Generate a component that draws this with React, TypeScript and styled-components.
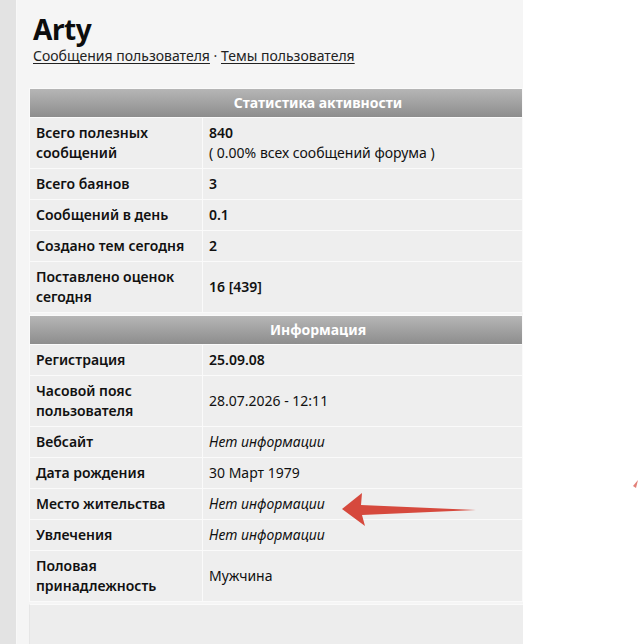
import React from "react";
import styled, { createGlobalStyle } from "styled-components";

const GlobalStyle = createGlobalStyle`
  html, body { margin: 0; padding: 0; background: #ffffff; }
  body { font-family: "Noto Sans", "Open Sans", sans-serif; color: #111; }
`;

const Page = styled.div`
  position: relative;
  display: flex;
  width: 640px;
  height: 644px;
  overflow: hidden;
  background: #ffffff;
`;

const Stripe = styled.div`
  width: 16px;
  flex: none;
  background: #e3e3e3;
  border-right: 1px solid #f8f8f8;
`;

const Content = styled.main`
  width: 494px;
  flex: none;
  background: #f5f5f5;
  padding: 12px 0 0 12px;
  display: flex;
  flex-direction: column;
`;

const Title = styled.h1`
  margin: 0 0 0 4px;
  font-size: 28px;
  line-height: 34px;
  font-weight: 700;
  letter-spacing: -0.4px;
  color: #0d0d0d;
`;

const Links = styled.div`
  margin: 0 0 22px 4px;
  font-size: 14px;
  line-height: 20px;
  color: #333;
`;

const Link = styled.a`
  color: #222;
  text-decoration: underline;
  text-underline-offset: 2px;
`;

const Section = styled.section`
  border: 1px solid #fafafa;
  margin-bottom: 2px;
  display: grid;
  grid-template-columns: 172px 1fr;
`;

const Header = styled.div`
  grid-column: 1 / -1;
  height: 28px;
  line-height: 28px;
  background: linear-gradient(#b6b6b6, #8d8d8d);
  color: #ffffff;
  font-weight: 700;
  font-size: 14px;
  text-align: center;
  padding-left: 84px;
`;

const Cell = styled.div<{ $label?: boolean; $bold?: boolean; $italic?: boolean }>`
  background: #eeeeee;
  border-top: 1px solid #fafafa;
  border-left: ${(p) => (p.$label ? "none" : "1px solid #fafafa")};
  padding: 5px 6px;
  min-height: 20px;
  display: flex;
  flex-direction: column;
  justify-content: center;
  font-size: 14px;
  line-height: 20px;
  font-weight: ${(p) => (p.$label || p.$bold ? 600 : 400)};
  font-style: ${(p) => (p.$italic ? "italic" : "normal")};
  color: #111;
`;

const Sub = styled.span`
  font-weight: 400;
`;

const Rest = styled.div`
  flex: 1;
  background: #ededed;
  border-top: 1px solid #fafafa;
  border-left: 1px solid #e6e6e6;
`;

const Arrow = styled.svg`
  position: absolute;
  left: 0;
  top: 0;
  pointer-events: none;
`;

type Row = { label: string; value: React.ReactNode; bold?: boolean; italic?: boolean };

const stats: Row[] = [
  {
    label: "Всего полезных сообщений",
    value: (
      <>
        <span>840</span>
        <Sub>( 0.00% всех сообщений форума )</Sub>
      </>
    ),
    bold: true,
  },
  { label: "Всего баянов", value: "3", bold: true },
  { label: "Сообщений в день", value: "0.1", bold: true },
  { label: "Создано тем сегодня", value: "2", bold: true },
  { label: "Поставлено оценок сегодня", value: "16 [439]", bold: true },
];

const info: Row[] = [
  { label: "Регистрация", value: "25.09.08", bold: true },
  { label: "Часовой пояс пользователя", value: "28.07.2026 - 12:11" },
  { label: "Вебсайт", value: "Нет информации", italic: true },
  { label: "Дата рождения", value: "30 Март 1979" },
  { label: "Место жительства", value: "Нет информации", italic: true },
  { label: "Увлечения", value: "Нет информации", italic: true },
  { label: "Половая принадлежность", value: "Мужчина" },
];

const Table: React.FC<{ title: string; rows: Row[] }> = ({ title, rows }) => (
  <Section>
    <Header>{title}</Header>
    {rows.map((r) => (
      <React.Fragment key={r.label}>
        <Cell $label>{r.label}</Cell>
        <Cell $bold={r.bold} $italic={r.italic}>
          {r.value}
        </Cell>
      </React.Fragment>
    ))}
  </Section>
);

export default function App() {
  return (
    <>
      <GlobalStyle />
      <Page>
        <Stripe />
        <Content>
          <Title>Arty</Title>
          <Links>
            <Link href="#">Сообщения пользователя</Link> · <Link href="#">Темы пользователя</Link>
          </Links>
          <Table title="Статистика активности" rows={stats} />
          <Table title="Информация" rows={info} />
          <Rest />
        </Content>
        <Arrow width="640" height="644" viewBox="0 0 640 644">
          <path
            d="M342 509 L362 493 L361 505 L476 510 L362 515 L365 526 Z"
            fill="#d6493d"
          />
          <path d="M633 486 L638 480 L636 488 Z" fill="#d6493d" opacity="0.7" />
        </Arrow>
      </Page>
    </>
  );
}
